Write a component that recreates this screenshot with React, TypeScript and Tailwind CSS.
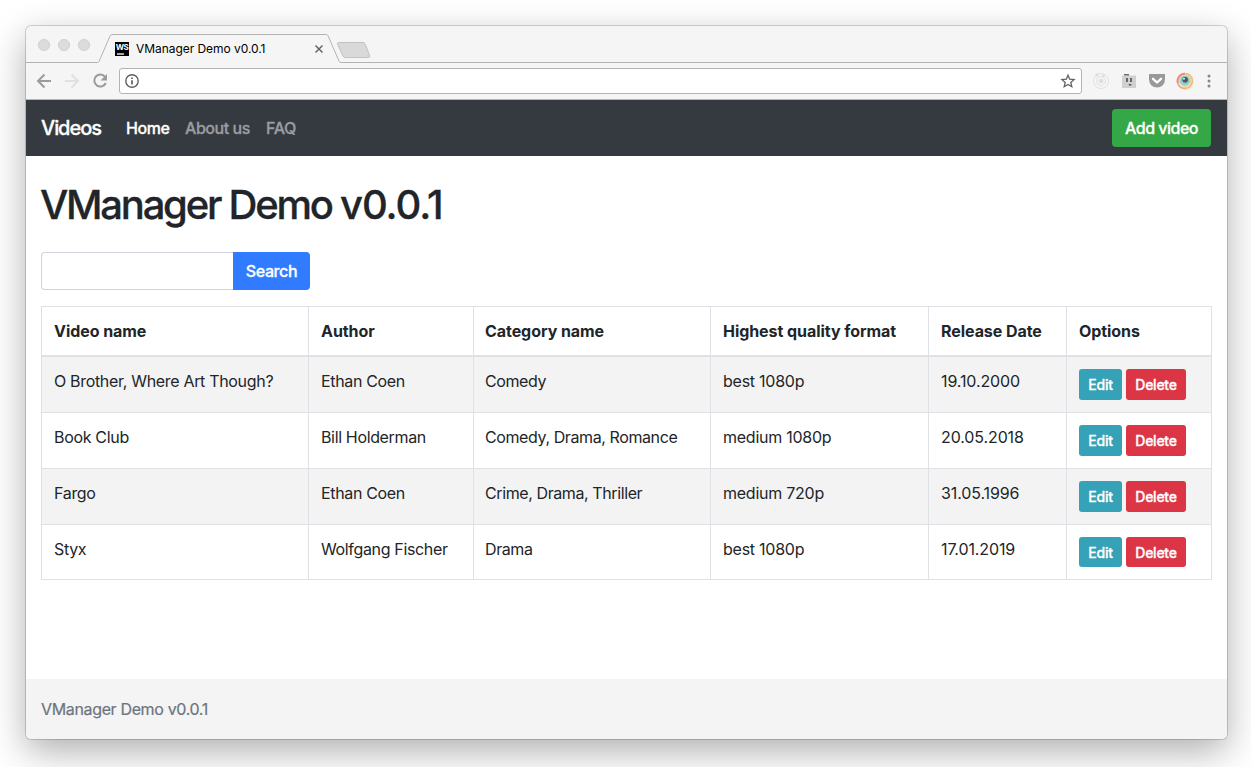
const videos = [
  { name: "O Brother, Where Art Though?", author: "Ethan Coen", category: "Comedy", format: "best 1080p", date: "19.10.2000" },
  { name: "Book Club", author: "Bill Holderman", category: "Comedy, Drama, Romance", format: "medium 1080p", date: "20.05.2018" },
  { name: "Fargo", author: "Ethan Coen", category: "Crime, Drama, Thriller", format: "medium 720p", date: "31.05.1996" },
  { name: "Styx", author: "Wolfgang Fischer", category: "Drama", format: "best 1080p", date: "17.01.2019" },
];

const headings = ["Video name", "Author", "Category name", "Highest quality format", "Release Date", "Options"];

function TabStrip() {
  return (
    <div className="relative flex h-[37px] items-start">
      <svg className="absolute inset-0" width="1201" height="37" viewBox="0 0 1201 37" fill="none">
        <path d="M0 36.5H71.5Q72.500 36.500 73 35.500L84 10Q84.800 8.500 86 8.500H300Q301.500 8.500 302.200 10L313 35.200Q313.600 36.500 315 36.500H1201" stroke="#b3b3b3" />
        <path d="M312.500 16.500H337Q338.500 16.500 339.200 18L343.800 30Q344 31.500 342.500 31.500H319.500Q317.800 31.500 317.200 30.500L311.500 18Q311.200 16.500 312.500 16.500Z" fill="#d9d9d9" stroke="#c2c2c2" />
        <g fill="#dcdcdc" stroke="#cfcfcf">
          <circle cx="18" cy="19" r="5.500" />
          <circle cx="38" cy="19" r="5.500" />
          <circle cx="58" cy="19" r="5.500" />
        </g>
        <path d="M289.500 19.500l7 7m0-7l-7 7" stroke="#666" strokeWidth="1.500" />
      </svg>
      <div className="relative ml-[89px] mt-4 flex h-3.5 w-3.5 flex-col bg-black text-white">
        <span className="h-[10px] text-center font-['Inter'] text-[8px] leading-[11px] font-bold tracking-[-0.600px]">WS</span>
        <span className="mt-px ml-[2px] h-[1.500px] w-[7px] bg-[#aaa]" />
      </div>
      <span className="relative ml-[7px] mt-[14px] text-[12px] leading-[18px] whitespace-nowrap text-black tracking-[-0.05px]">VManager Demo v0.0.1</span>
    </div>
  );
}

function Toolbar() {
  return (
    <div className="flex h-[37px] items-start border-b border-[#b5b5b5]">
      <svg width="93" height="36" viewBox="0 0 93 36" fill="none" strokeWidth="2">
        <path d="M25 18H12.500M18.500 11.500L12 18l6.500 6.500" stroke="#999b9e" />
        <path d="M39 18h12.500M45.500 11.500L52 18l-6.500 6.500" stroke="#e1e1e1" />
        <path d="M79 13.800A6 6 0 1 0 79.800 20" stroke="#999b9e" />
        <path d="M81 11v6.500h-6.500z" fill="#999b9e" />
      </svg>
      <div className="mt-[5px] flex h-[26px] w-[963px] items-center justify-between rounded-[3px] border border-[#b3b3b3] bg-white px-[5px]">
        <svg width="14" height="14" viewBox="0 0 14 14" fill="none">
          <circle cx="7" cy="7" r="6.200" stroke="#5f6064" strokeWidth="1.400" />
          <path d="M7 6.200v4.300M7 3.500v1.500" stroke="#5f6064" strokeWidth="1.700" />
        </svg>
        <svg width="16" height="16" viewBox="0 0 16 16" fill="none">
          <path d="M8 2.200l1.700 4 4.400.4-3.300 2.900 1 4.200L8 11.500l-3.800 2.200 1-4.200-3.300-2.900 4.400-.4z" stroke="#606367" strokeWidth="1.300" />
        </svg>
      </div>
      <svg width="145" height="36" viewBox="0 0 145 36" fill="none">
        <g stroke="#e1e1e1">
          <circle cx="19" cy="18" r="7.500" />
          <circle cx="19" cy="18" r="4.500" />
          <circle cx="19" cy="18" r="2" fill="#dcdcdc" />
          <circle cx="15" cy="12" r="1.300" fill="#dcdcdc" />
          <circle cx="21.500" cy="12.500" r="1" fill="#dcdcdc" />
        </g>
        <path d="M40 12.500h14V25H40z" fill="#d0d0d0" />
        <path d="M42 11h5v1.500h-5z" fill="#6d6d6d" />
        <path d="M45 15v4M49 15v4" stroke="#555" strokeWidth="1.700" />
        <path d="M46.800 21.700h2.500" stroke="#555" strokeWidth="1.600" />
        <path d="M67 11h16v5.500a8 8 0 0 1-16 0z" fill="#999" />
        <path d="M71 15.800l4 3.700 4-3.700" stroke="#fff" strokeWidth="2.300" strokeLinecap="round" strokeLinejoin="round" />
        <path d="M95.800 20A7.400 7.400 0 0 1 103 10.700" stroke="#ef887c" strokeWidth="2" />
        <path d="M103 10.700A7.400 7.400 0 0 1 110.400 18" stroke="#f3bd86" strokeWidth="2" />
        <path d="M110.400 18A7.400 7.400 0 0 1 103 25.400" stroke="#f6ba7b" strokeWidth="2" />
        <path d="M103 25.400A7.400 7.400 0 0 1 95.800 20" stroke="#f5a98b" strokeWidth="2" />
        <circle cx="103" cy="17.800" r="5.600" fill="#9ed9c2" stroke="#e2d99d" strokeWidth="1" />
        <circle cx="103" cy="17" r="4" fill="#7fc4d3" />
        <circle cx="103.200" cy="16.800" r="2.700" fill="#5d5154" />
        <circle cx="102" cy="15.700" r="1" fill="#dcecf0" />
        <g fill="#858689">
          <circle cx="127" cy="13" r="1.500" />
          <circle cx="127" cy="18" r="1.500" />
          <circle cx="127" cy="23" r="1.500" />
        </g>
      </svg>
    </div>
  );
}

function Navbar() {
  return (
    <nav className="flex h-14 items-center bg-[#343a40] pr-4 pl-[15px] font-medium">
      <a className="w-[85px] text-[20px] leading-[30px] tracking-[-1.050px] text-white [-webkit-text-stroke:0.3px]">Videos</a>
      <a className="w-[59px] text-white tracking-[-0.450px] [-webkit-text-stroke:0.3px]">Home</a>
      <a className="w-[81px] text-[#9a9da0] tracking-[-0.450px] [-webkit-text-stroke:0.3px]">About us</a>
      <a className="text-[#9a9da0] tracking-[-0.35px] [-webkit-text-stroke:0.3px]">FAQ</a>
      <button className="ml-auto h-[38px] w-[99px] rounded bg-[#34a846] text-white tracking-[-0.500px] whitespace-nowrap [-webkit-text-stroke:0.3px]">Add video</button>
    </nav>
  );
}

function VideoTable() {
  const cell = "border-b border-l border-[#dee2e6] pl-3 pt-3 align-top whitespace-nowrap last:border-r";
  return (
    <table className="mt-4 w-[1171px] table-fixed border-separate border-spacing-0 text-left">
      <colgroup>
        <col className="w-[267px]" />
        <col className="w-[165px]" />
        <col className="w-[237px]" />
        <col className="w-[218px]" />
        <col className="w-[138px]" />
        <col className="w-[146px]" />
      </colgroup>
      <thead>
        <tr className="h-[51px]">
          {headings.map((h) => (
            <th key={h} className="border-t border-b-2 border-l border-[#dee2e6] pt-3 pl-3 align-top font-bold whitespace-nowrap tracking-[-0.060px] last:border-r nth-3:pl-[11px]">{h}</th>
          ))}
        </tr>
      </thead>
      <tbody>
        {videos.map((v) => (
          <tr key={v.name} className="group h-14 odd:bg-[#f3f3f3] last:h-[55px]">
            <td className={cell}><span className="tracking-[-0.320px]">{v.name}</span></td>
            <td className={cell}>{v.author}</td>
            <td className={cell}><span className="-ml-px tracking-[-0.400px]">{v.category}</span></td>
            <td className={cell}><span className="tracking-[-0.250px]">{v.format}</span></td>
            <td className={cell}><span className="tracking-[-0.110px]">{v.date}</span></td>
            <td className={cell}>
              <div className="flex gap-1 text-[14px] font-medium text-white tracking-[-0.250px] [-webkit-text-stroke:0.3px]">
                <button className="h-[31px] w-[43px] rounded-[3px] bg-[#36a2b8] leading-[31px] group-last:h-[30px]">Edit</button>
                <button className="h-[31px] w-[60px] rounded-[3px] bg-[#dc3545] leading-[31px] group-last:h-[30px]">Delete</button>
              </div>
            </td>
          </tr>
        ))}
      </tbody>
    </table>
  );
}

export default function App() {
  return (
    <div className="h-[767px] w-[1251px] overflow-hidden bg-white p-[26px] font-['Inter',sans-serif] text-[16px] leading-6 tracking-[-0.35px] text-[#212529]">
      <div className="flex h-[713px] w-[1201px] flex-col overflow-hidden rounded-[5px] bg-[#f5f5f5] shadow-[0_0_0_1px_rgba(0,0,0,0.16),0_12px_36px_rgba(0,0,0,0.32)]">
        <TabStrip />
        <Toolbar />
        <Navbar />
        <main className="flex-1 bg-white px-[15px] pt-[25px]">
          <h1 className="-ml-px text-[40px] leading-[48px] font-medium tracking-[-2.250px] [-webkit-text-stroke:0.3px]">
            VManager Demo <span className="tracking-[-1.050px]">v0.0.1</span>
          </h1>
          <form className="mt-[23px] flex">
            <input className="h-[38px] w-48 rounded-l border border-r-0 border-[#ced4da] bg-white px-3 outline-none" />
            <button type="button" className="h-[38px] w-[77px] rounded-r bg-[#307bff] font-medium text-white tracking-[-0.400px] [-webkit-text-stroke:0.3px]">Search</button>
          </form>
          <VideoTable />
        </main>
        <footer className="flex h-[60px] items-center bg-[#f4f4f4] px-[15px] text-[#6c757d] [-webkit-text-stroke:0.2px]">VManager Demo v0.0.1</footer>
      </div>
    </div>
  );
}
